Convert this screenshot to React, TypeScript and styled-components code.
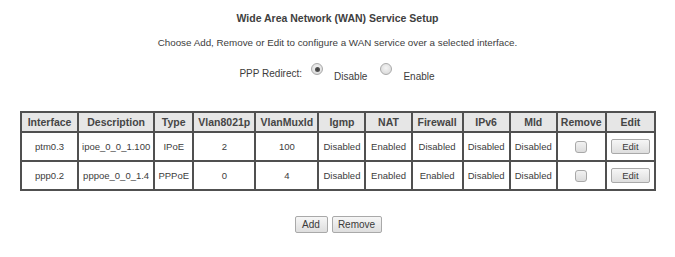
import React from "react";
import styled, {createGlobalStyle} from "styled-components";

const GlobalStyle = createGlobalStyle`
  html, body {
    margin: 0;
    padding: 0;
    background: #ffffff;
  }
  body {
    font-family: "Liberation Sans", Arial, sans-serif;
    color: #3a3a3a;
  }
`

type Col = {title: string, width: number}

const columns: Col[] = [
  {title: "Interface", width: 57},
  {title: "Description", width: 76},
  {title: "Type", width: 39},
  {title: "Vlan8021p", width: 62},
  {title: "VlanMuxId", width: 63},
  {title: "Igmp", width: 47},
  {title: "NAT", width: 46},
  {title: "Firewall", width: 51},
  {title: "IPv6", width: 47},
  {title: "Mld", width: 47},
  {title: "Remove", width: 49},
  {title: "Edit", width: 49},
]

const services = [
  {iface: "ptm0.3", desc: "ipoe_0_0_1.100", type: "IPoE", vlan8021p: "2", muxId: "100", igmp: "Disabled", nat: "Enabled", firewall: "Disabled", ipv6: "Disabled", mld: "Disabled"},
  {iface: "ppp0.2", desc: "pppoe_0_0_1.4", type: "PPPoE", vlan8021p: "0", muxId: "4", igmp: "Disabled", nat: "Enabled", firewall: "Enabled", ipv6: "Disabled", mld: "Disabled"},
]

export default function App() {
  return <Page>
    <GlobalStyle />
    <Title>Wide Area Network (WAN) Service Setup</Title>
    <Intro>Choose Add, Remove or Edit to configure a WAN service over a selected interface.</Intro>

    <RedirectRow>
      <RedirectLabel>PPP Redirect:</RedirectLabel>
      <Radio type="radio" name="pppRedirect" defaultChecked />
      <RadioText>Disable</RadioText>
      <Radio type="radio" name="pppRedirect" />
      <RadioText>Enable</RadioText>
    </RedirectRow>

    <ServiceTable>
      <thead>
        <tr>
          {columns.map(c => <HeadCell key={c.title} $w={c.width}>{c.title}</HeadCell>)}
        </tr>
      </thead>
      <tbody>
        {services.map(s => (
          <tr key={s.iface}>
            <Cell>{s.iface}</Cell>
            <Cell>{s.desc}</Cell>
            <Cell>{s.type}</Cell>
            <Cell>{s.vlan8021p}</Cell>
            <Cell>{s.muxId}</Cell>
            <Cell>{s.igmp}</Cell>
            <Cell>{s.nat}</Cell>
            <Cell>{s.firewall}</Cell>
            <Cell>{s.ipv6}</Cell>
            <Cell>{s.mld}</Cell>
            <Cell><Check type="checkbox" /></Cell>
            <Cell><EditButton>Edit</EditButton></Cell>
          </tr>
        ))}
      </tbody>
    </ServiceTable>

    <Actions>
      <FormButton $w={33}>Add</FormButton>
      <FormButton $w={50}>Remove</FormButton>
    </Actions>
  </Page>
}

const Page = styled.div`
  width: 675px;
  height: 257px;
  display: flex;
  flex-direction: column;
  align-items: center;
  padding-top: 11px;
  box-sizing: border-box;
`

const Title = styled.div`
  font-size: 10.5px;
  font-weight: bold;
  line-height: 14px;
  color: #404040;
`

const Intro = styled.div`
  font-size: 9.8px;
  line-height: 14px;
  margin-top: 11px;
  color: #3c3c3c;
`

const RedirectRow = styled.div`
  display: flex;
  align-items: flex-start;
  height: 20px;
  margin-top: 12px;
  margin-left: 3px;
  font-size: 10px;
  color: #3c3c3c;
`

const RedirectLabel = styled.span`
  margin-top: 6px;
  line-height: 12px;
`

const Radio = styled.input`
  appearance: none;
  margin: 1px 0 0 9px;
  width: 12px;
  height: 12px;
  border-radius: 50%;
  border: 1px solid #aaaaaa;
  background: radial-gradient(circle at 50% 40%, #f4f4f4 0%, #dcdcdc 75%, #cfcfcf 100%);
  box-sizing: border-box;
  position: relative;

  &:checked::after {
    content: "";
    position: absolute;
    left: 2.5px;
    top: 2.5px;
    width: 5px;
    height: 5px;
    border-radius: 50%;
    background: radial-gradient(circle, #3e3e3e 0%, #5c5c5c 100%);
  }
  & + span {
    margin-left: 11px;
  }
`

const RadioText = styled.span`
  margin-top: 9px;
  line-height: 12px;
  margin-right: 4px;
`

const ServiceTable = styled.table`
  margin-top: 29px;
  margin-left: 1px;
  border-collapse: separate;
  border-spacing: 0;
  border: 1px solid #505050;
  table-layout: fixed;
  width: 636px;
`

const HeadCell = styled.th<{$w: number}>`
  width: ${p => p.$w}px;
  box-sizing: border-box;
  height: 20px;
  padding: 0;
  border: 1px solid #505050;
  background: #e6e6e6;
  font-size: 10.5px;
  font-weight: bold;
  color: #454545;
  text-align: center;
  white-space: nowrap;
  overflow: hidden;
`

const Cell = styled.td`
  box-sizing: border-box;
  height: 29px;
  padding: 0;
  border: 1px solid #505050;
  font-size: 9.5px;
  color: #3c3c3c;
  text-align: center;
  white-space: nowrap;
  overflow: hidden;
`

const Check = styled.input`
  appearance: none;
  display: block;
  margin: 1px auto 0;
  width: 12px;
  height: 12px;
  border: 1px solid #a8a8a8;
  border-radius: 3px;
  background: linear-gradient(#f2f2f2, #dcdcdc);
  box-sizing: border-box;
`

const EditButton = styled.button`
  display: block;
  margin: 0 auto;
  width: 39px;
  height: 15px;
  padding: 0;
  font-family: "Liberation Sans", Arial, sans-serif;
  font-size: 9.5px;
  color: #3a3a3a;
  border: 1px solid #a9a9a9;
  border-radius: 2px;
  background: linear-gradient(#f6f6f6, #dedede);
`

const Actions = styled.div`
  display: flex;
  gap: 4px;
  margin-top: 25px;
  margin-left: 1px;
`

const FormButton = styled.button<{$w: number}>`
  width: ${p => p.$w}px;
  height: 17px;
  padding: 0;
  font-family: "Liberation Sans", Arial, sans-serif;
  font-size: 10px;
  color: #3a3a3a;
  border: 1px solid #a9a9a9;
  border-radius: 2px;
  background: linear-gradient(#f6f6f6, #dedede);
`
